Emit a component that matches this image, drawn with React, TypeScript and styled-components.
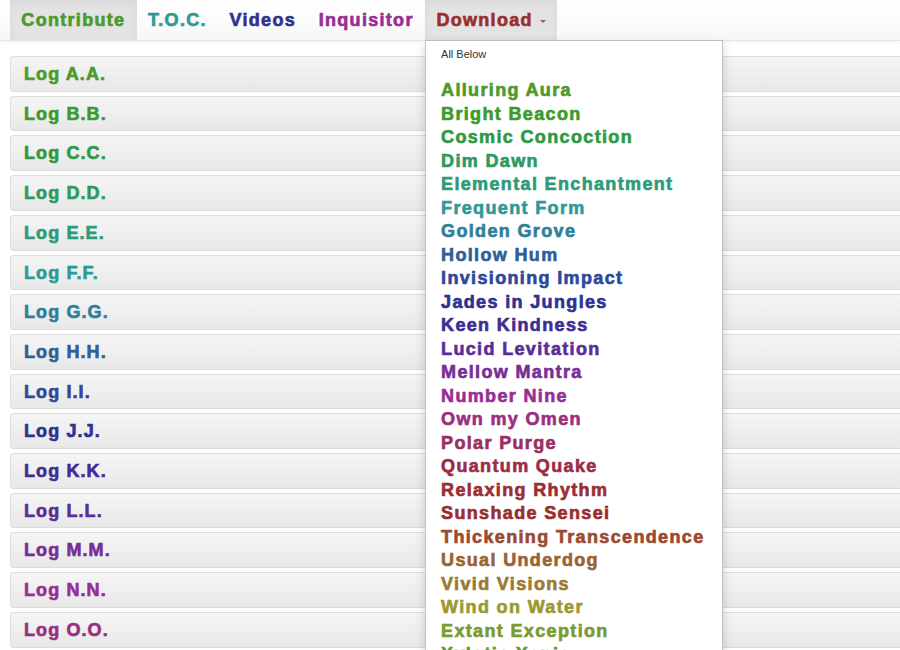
import React from "react";
import styled, { createGlobalStyle } from "styled-components";

const Global = createGlobalStyle`
  html, body { margin: 0; padding: 0; background: #fff; }
  body { font-family: "Liberation Sans", Arial, sans-serif; overflow: hidden; }
`;

const Page = styled.div`
  width: 900px;
  min-height: 650px;
`;

const NavBar = styled.nav`
  height: 40px;
  background: linear-gradient(#ffffff, #f7f7f7);
  border-bottom: 1px solid #e6e6e6;
  box-shadow: 0 1px 4px rgba(0, 0, 0, 0.06);
  display: flex;
  padding-left: 10px;
  position: relative;
  z-index: 5;
`;

const NavItem = styled.div<{ $active?: boolean; $color: string }>`
  position: relative;
  display: flex;
  align-items: center;
  gap: 7px;
  padding: 0 11.35px;
  height: 40px;
  color: ${(p) => p.$color};
  font-size: 18px;
  font-weight: 700;
  letter-spacing: 1.3px;
  -webkit-text-stroke: 0.65px ${(p) => p.$color};
  background: ${(p) => (p.$active ? "#e3e3e3" : "transparent")};
  box-shadow: ${(p) => (p.$active ? "inset 0 3px 8px rgba(0,0,0,0.05)" : "none")};
`;

const Caret = styled.span`
  width: 0;
  height: 0;
  border-top: 3px solid #a5595b;
  border-left: 3px solid transparent;
  border-right: 3px solid transparent;
  margin-top: 2px;
`;

const Menu = styled.div`
  position: absolute;
  top: 100%;
  left: 0;
  width: 296px;
  background: #fff;
  border: 1px solid #c4c4c4;
  border-top-color: #bdbdbd;
  box-shadow: 0 5px 10px rgba(0, 0, 0, 0.18);
  padding: 3px 0 20px;
  letter-spacing: normal;
  -webkit-text-stroke: 0;
`;

const MenuHeader = styled.div`
  font-size: 11px;
  font-weight: 400;
  color: #333;
  padding: 0 15px;
  line-height: 20px;
  margin-bottom: 15px;
  letter-spacing: 0;
`;

const MenuItem = styled.div<{ $color: string }>`
  padding: 0 15px;
  font-size: 18px;
  font-weight: 700;
  line-height: 23.52px;
  white-space: nowrap;
  color: ${(p) => p.$color};
  letter-spacing: 1.35px;
  -webkit-text-stroke: 0.65px ${(p) => p.$color};
`;

const Content = styled.main`
  padding: 15px 0 0 10px;
  display: flex;
  flex-direction: column;
  gap: 4px;
`;

const Panel = styled.div<{ $color: string }>`
  border: 1px solid #dcdcdc;
  border-right: none;
  border-radius: 4px 0 0 4px;
  background: linear-gradient(#f5f5f5, #e8e8e8);
  padding: 8px 13px 6px;
  line-height: 19.71px;
  font-size: 18px;
  font-weight: 700;
  color: ${(p) => p.$color};
  letter-spacing: 1.1px;
  -webkit-text-stroke: 0.65px ${(p) => p.$color};
`;

const colors: Record<string, string> = {
  A: "#4b9a2b",
  B: "#3c9a2e",
  C: "#2e9a44",
  D: "#2e9a5e",
  E: "#2e9a7a",
  F: "#2e9a96",
  G: "#2e7f9a",
  H: "#2e5f9a",
  I: "#2e489a",
  J: "#2e3290",
  K: "#3f2e92",
  L: "#5a2e96",
  M: "#782e96",
  N: "#962e96",
  O: "#9a2e80",
  P: "#9a2e62",
  Q: "#9a2e46",
  R: "#9a2e34",
  S: "#9a2e2e",
  T: "#9a4a30",
  U: "#9a6332",
  V: "#9a7a32",
  W: "#9a9a32",
  X2: "#7a9a32",
  Y: "#5e9a30",
};

const items: [string, string][] = [
  ["Alluring Aura", colors.A],
  ["Bright Beacon", colors.B],
  ["Cosmic Concoction", colors.C],
  ["Dim Dawn", colors.D],
  ["Elemental Enchantment", colors.E],
  ["Frequent Form", colors.F],
  ["Golden Grove", colors.G],
  ["Hollow Hum", colors.H],
  ["Invisioning Impact", colors.I],
  ["Jades in Jungles", colors.J],
  ["Keen Kindness", colors.K],
  ["Lucid Levitation", colors.L],
  ["Mellow Mantra", colors.M],
  ["Number Nine", colors.N],
  ["Own my Omen", colors.O],
  ["Polar Purge", colors.P],
  ["Quantum Quake", colors.Q],
  ["Relaxing Rhythm", colors.R],
  ["Sunshade Sensei", colors.S],
  ["Thickening Transcendence", colors.T],
  ["Usual Underdog", colors.U],
  ["Vivid Visions", colors.V],
  ["Wind on Water", colors.W],
  ["Extant Exception", colors.X2],
  ["Xylotic Xenia", colors.Y],
  ["Young Yearnings", colors.A],
];

const logs = "ABCDEFGHIJKLMNO".split("");

export default function App() {
  return (
    <Page>
      <Global />
      <NavBar>
        <NavItem $active $color="#4b9a2b">Contribute</NavItem>
        <NavItem $color="#2e9a96">T.O.C.</NavItem>
        <NavItem $color="#2e3290">Videos</NavItem>
        <NavItem $color="#962e96">Inquisitor</NavItem>
        <NavItem $active $color="#9a2e30">
          Download
          <Caret />
          <Menu>
            <MenuHeader>All Below</MenuHeader>
            {items.map(([label, c]) => (
              <MenuItem key={label} $color={c}>
                {label}
              </MenuItem>
            ))}
          </Menu>
        </NavItem>
      </NavBar>
      <Content>
        {logs.map((l) => (
          <Panel key={l} $color={colors[l]}>
            Log {l}.{l}.
          </Panel>
        ))}
      </Content>
    </Page>
  );
}
